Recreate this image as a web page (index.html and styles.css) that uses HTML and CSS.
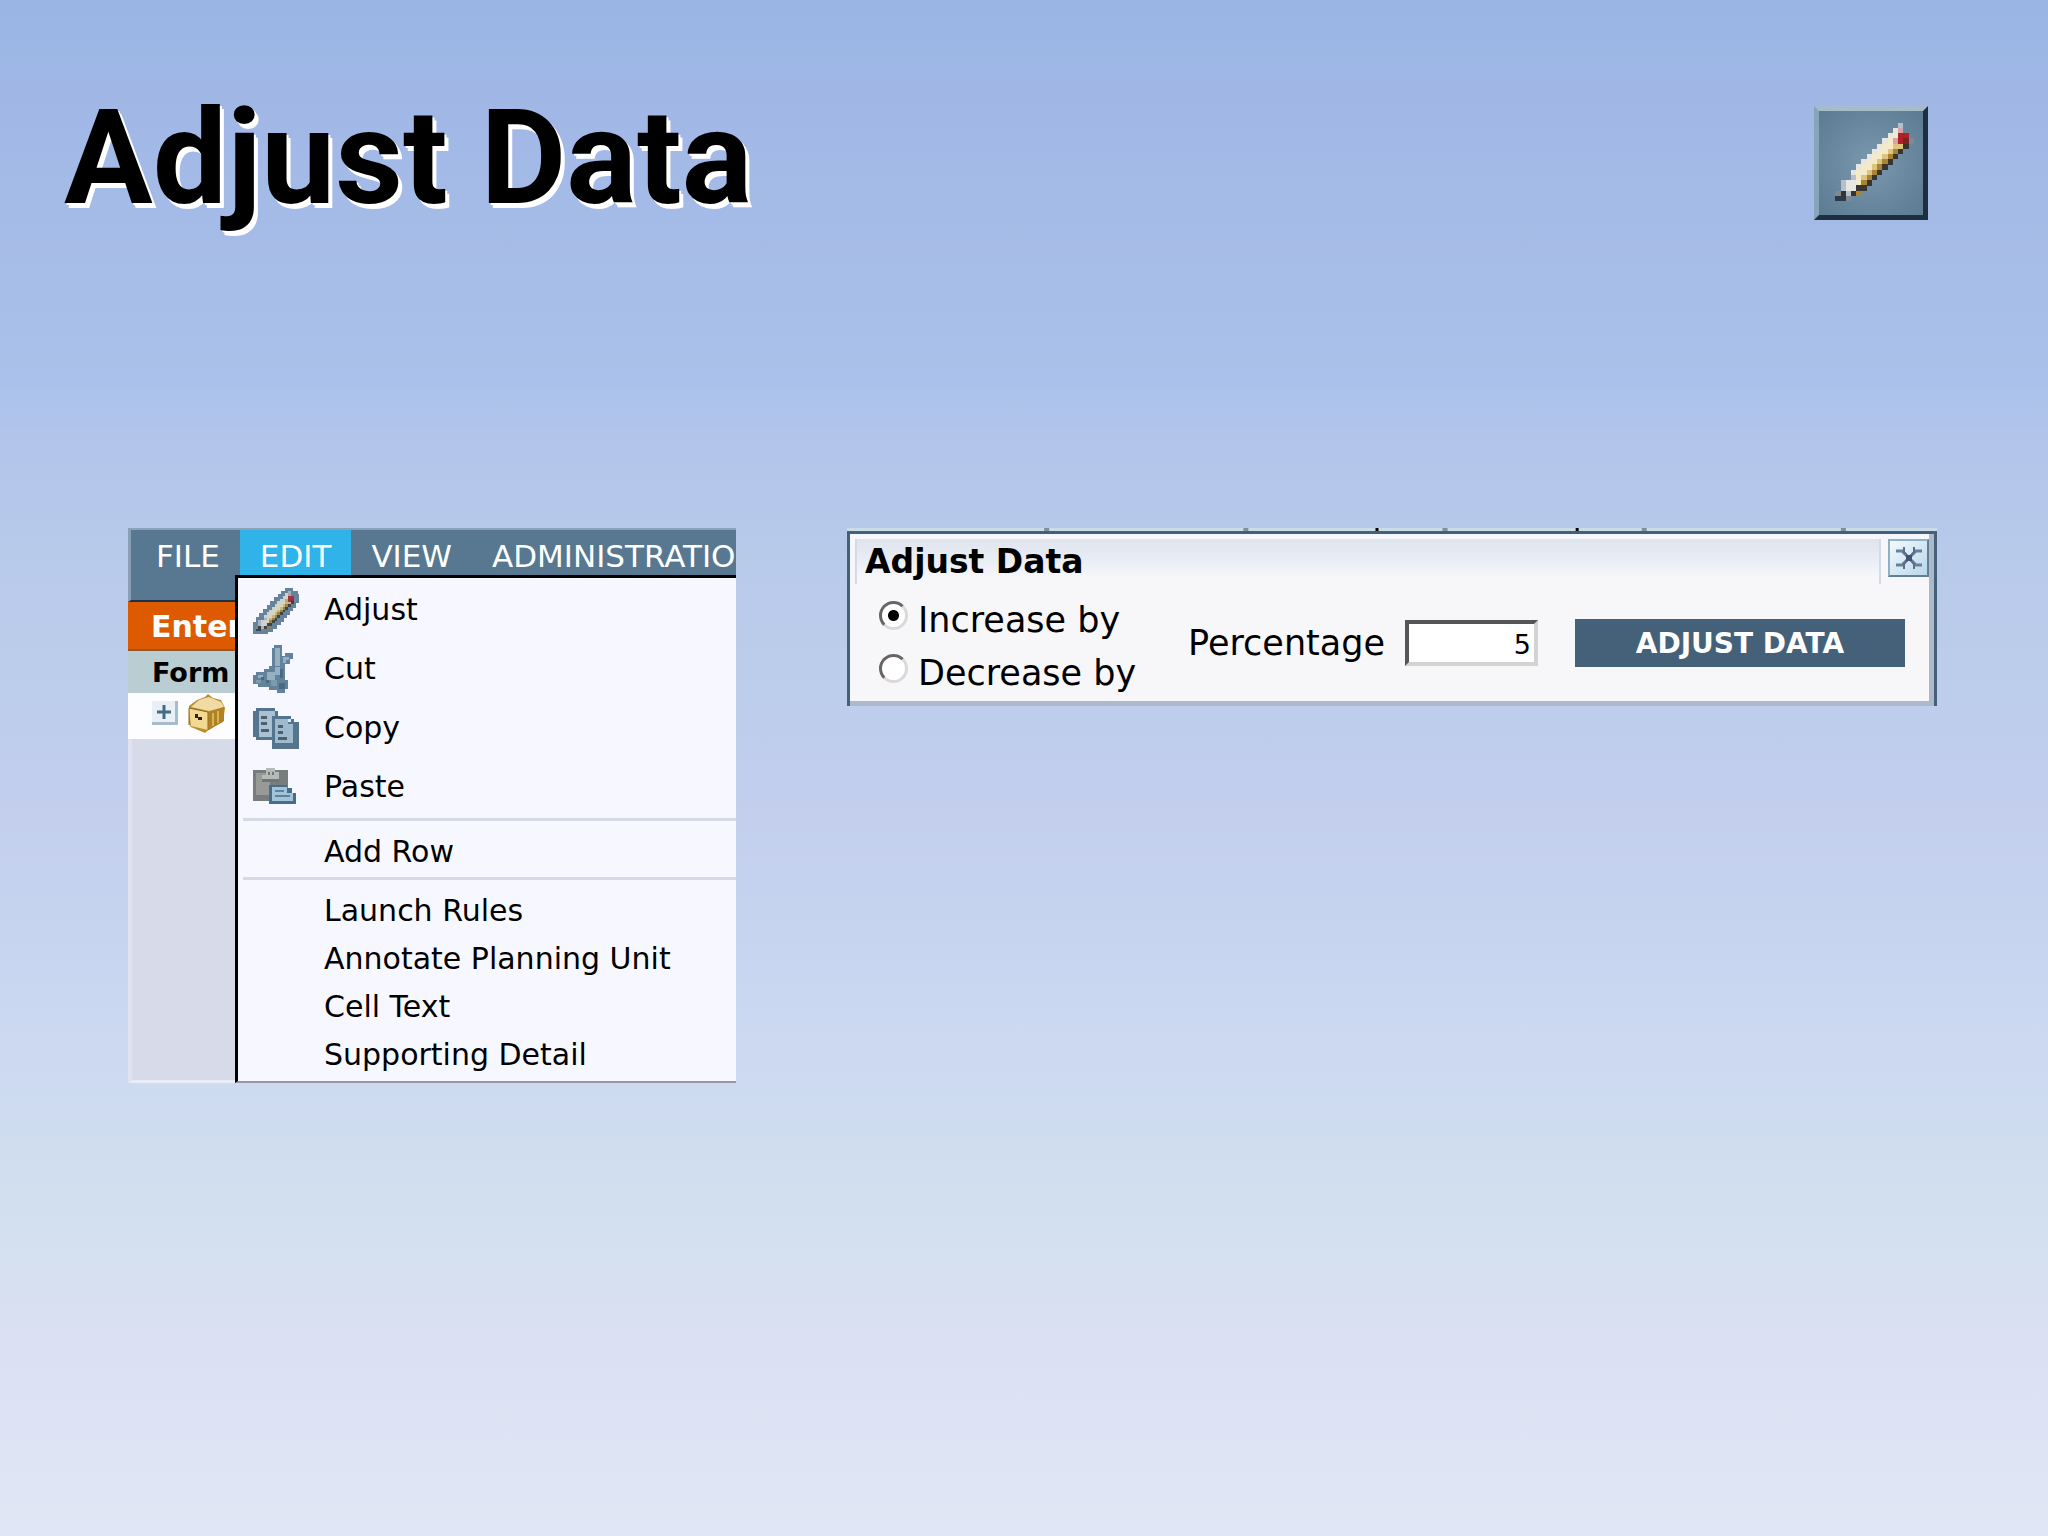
FILE: index.html
```html
<!DOCTYPE html>
<html lang="en">
<head>
<meta charset="utf-8">
<title>Adjust Data</title>
<link rel="stylesheet" href="styles.css">
</head>
<body>
<svg class="defs" width="0" height="0" aria-hidden="true">
  <symbol id="pencil" viewBox="8 5 17 17">
    <g fill="none" stroke-width="1.04" transform="translate(0 .5)">
      <path stroke="#b4c1ca" d="M21 6h1M10 17h1M10 18h1M12 16h1M11 19h1"/>
      <path stroke="#e6e6e2" d="M20 7h1M19 8h1M18 9h1M17 10h1M16 11h1M15 12h1M14 13h1M13 14h1M12 15h1M11 17h2M11 18h2"/>
      <path stroke="#f4e9c8" d="M20 8h1M19 9h1M18 10h2M17 11h2M16 12h2M15 13h2M14 14h2M13 15h2M13 16h1M13 17h1"/>
      <path stroke="#dcc47c" d="M20 10h2M19 11h1M18 12h1M17 13h1M16 14h1M15 15h1M14 16h1"/>
      <path stroke="#a98433" d="M20 11h1M19 12h1M18 13h1M17 14h1M16 15h1M15 16h1M14 17h1M13 19h1"/>
      <path stroke="#d3a5a8" d="M21 7h1M20 9h1"/>
      <path stroke="#b01f2a" d="M21 8h2M21 9h1"/>
      <path stroke="#7e2024" d="M22 9h1"/>
      <path stroke="#38342f" d="M22 10h1M21 11h1M20 12h1M19 13h1M18 14h1M17 15h1M16 16h1M15 17h1M13 18h2M12 19h1M10 19h1"/>
      <path stroke="#7f8893" d="M9 19h1M11 20h1M23 9h1"/>
      <path stroke="#2d3948" d="M9 20h2"/>
    </g>
  </symbol>
</svg>

<header class="header">
  <h1>Adjust Data</h1>
  <button class="tool" type="button" aria-label="Adjust">
    <svg viewBox="5.8 3.7 20.6 20.6" shape-rendering="crispEdges"><use href="#pencil" x="8" y="5" width="17.6" height="17.6"/></svg>
  </button>
</header>

<main class="content">
  <section class="app">
    <nav class="menubar">
      <button type="button">FILE</button>
      <button type="button" class="open">EDIT</button>
      <button type="button">VIEW</button>
      <button type="button">ADMINISTRATION</button>
    </nav>
    <div class="enter">Enter</div>
    <div class="form-head">Form</div>
    <div class="tree">
      <button type="button" class="expand" aria-label="Expand">
        <svg viewBox="0 0 14 14"><path d="M7 0v14M0 7h14" stroke="#456a86" stroke-width="3"/></svg>
      </button>
      <svg class="cube" viewBox="0 0 40 40">
        <path d="M2 12 10 6 18 3 21 0 26 4 34 6 38 14 36 28 24 34 18 39 4 33 2 30z" fill="#b98f2e"/>
        <path d="M4 13 12 6 22 3 34 8 37 13 22 17z" fill="#f1dba4"/>
        <path d="M2 14 21 18V36L4 32z" fill="#f2d890"/>
        <path d="M22 18 37 13V27L22 36z" fill="#b08223"/>
        <path d="M26 19v13M31 17v12" stroke="#d9b457" stroke-width="2"/>
        <path d="M2 14 21 18V36M2 14v17" fill="none" stroke="#8d6a1c" stroke-width="1"/>
        <path d="M8 20h3v3h4v3h-4v-2H8z" fill="#2d220c"/>
      </svg>
    </div>
    <div class="side"></div>

    <ul class="menu">
      <li><button type="button" class="item tall">
        <svg viewBox="0 0 46 48" shape-rendering="crispEdges">
          <path fill="#65839a" d="M32 2h8v3h5v3h1v9h-3v5h-3v3h-3v4h-3v3h-3v4h-3v3h-4v4h-4v3h-5v3H0V36h3v-5h3v-4h4v-4h4v-4h3v-4h4v-4h4V8h3V5h4z"/>
          <use href="#pencil" x="0" y="2" width="46" height="46" opacity=".8"/>
        </svg>Adjust</button></li>
      <li><button type="button" class="item tall">
        <svg viewBox="0 0 46 48" shape-rendering="crispEdges">
          <path fill="#63839b" d="M21 0h8v11h3V8h8v6h-3v5h-5v16h3v9h-3v4h-8v-3h-8v-3H5v-3H0V30h3v-3h8v-3h5v-3h3V3h2z"/>
          <path fill="#96b0c3" d="M22 3h5v18h-5zM30 12h6v3h-3v3h-3zM14 27h8v-5h5v8h-5v5h-8zM5 30h5v3H5z"/>
          <path fill="#4a6a83" d="M8 32h3v3H8zM13 35h3v3h-3zM26 38h6v6h-6zM27 24h3v9h-3z"/>
          <path fill="#7d9bb0" d="M18 35h6v6h-6zM3 35h5v3H3z"/>
        </svg>Cut</button></li>
      <li><button type="button" class="item tall">
        <svg viewBox="0 0 46 48" shape-rendering="crispEdges">
          <path fill="#55758e" d="M3 4h19v3h3v5h13v3h3v3h5v27H19v-9H3v-3H0V7h3z"/>
          <path fill="#a9c1d2" d="M6 7h16v5h-3v21H6z"/>
          <path fill="#9dbace" d="M22 15h13v5h5v19H22z"/>
          <path stroke="#4d5f6d" stroke-width="3" d="M8 13h6M8 19h6M8 26h8M25 22h5M25 28h5M25 34h9"/>
          <path fill="#dbe8f0" d="M35 15h3v3h-3z"/>
        </svg>Copy</button></li>
      <li><button type="button" class="item tall">
        <svg viewBox="0 0 46 48" shape-rendering="crispEdges">
          <path fill="#777c7c" d="M0 7h35v31H0z"/>
          <path fill="#979a97" d="M3 10h14v22H3z"/>
          <path fill="#b5bab8" d="M13 5h9v4h4v7H9v-4h4z"/>
          <path fill="#6f7675" d="M15 9h2v3h-2zM19 9h2v3h-2zM9 16h17v3H9z"/>
          <path fill="#466d89" d="M16 22h18v3h5v5h4v11H16z"/>
          <path fill="#a3c3d8" d="M19 24h15v6h6v8H19z"/>
          <path stroke="#5c84a0" stroke-width="2" d="M22 28h9M22 33h15"/>
        </svg>Paste</button></li>
      <li class="rule" role="separator"></li>
      <li><button type="button" class="item">Add Row</button></li>
      <li class="rule" role="separator"></li>
      <li><button type="button" class="item">Launch Rules</button></li>
      <li><button type="button" class="item">Annotate Planning Unit</button></li>
      <li><button type="button" class="item">Cell Text</button></li>
      <li><button type="button" class="item">Supporting Detail</button></li>
    </ul>
  </section>

  <section class="dialog">
    <svg class="ticks" viewBox="0 0 1089 3" preserveAspectRatio="none" aria-hidden="true">
      <path fill="#7f8f9f" d="M197 0h5v3h-5zM396 0h5v3h-5zM595 0h5v3h-5zM794 0h5v3h-5zM993 0h5v3h-5z"/>
      <path fill="#000" d="M528 0h3v3h-3zM728 0h3v3h-3z"/>
    </svg>
    <form class="frame">
      <div class="titlebar">
        <h2>Adjust Data</h2>
        <button type="button" class="close" aria-label="Close">
          <svg viewBox="0 0 26 22"><path d="M0 4h6l3 3 4 4-4 4-3 3H0M26 4h-6l-3 3-4 4 4 4 3 3h6" fill="none" stroke="#68809d" stroke-width="3"/><path d="M8 0v5l10 12v5M18 0v5L8 17v5" fill="none" stroke="#5d6d8a" stroke-width="2"/><path d="M10 8h6v6h-6z" fill="#46536f"/></svg>
        </button>
      </div>
      <div class="fields">
        <div class="choices">
          <label><input type="radio" name="direction" checked>Increase by</label>
          <label><input type="radio" name="direction">Decrease by</label>
        </div>
        <label class="percent">Percentage <input type="text" value="5"></label>
        <button type="button" class="apply">ADJUST DATA</button>
      </div>
    </form>
  </section>
</main>
</body>
</html>
```
FILE: styles.css
```css
* { box-sizing: border-box; }

body {
  margin: 0;
  min-height: 100vh;
  font-family: "DejaVu Sans", Verdana, sans-serif;
  color: #000;
  background: linear-gradient(#99b5e3 0%, #a1b7e6 7%, #a5bbe7 14%, #aac2ea 25%, #b3c5ea 29%, #b8caea 36%, #bccdec 43%, #c2ceec 52%, #c8d5f0 62%, #cddaf1 70%, #d1dfee 78%, #d6e0f1 83%, #dbe1f3 88%, #e1e6f5 100%);
}

button {
  margin: 0;
  padding: 0;
  border: 0;
  background: none;
  font: inherit;
  color: inherit;
}

svg { display: block; }
.defs { position: absolute; }

.header {
  display: flex;
  justify-content: space-between;
  align-items: flex-start;
  padding: 106px 120px 0 64px;
}

h1 {
  margin: 0;
  font: 700 132px/104px Roboto, sans-serif;
  text-shadow: 2px 2px #fff, 4px 5px #fff;
}

.tool {
  width: 114px;
  height: 114px;
  border: 5px solid;
  border-color: #a6bccb #1d2f3f #1d2f3f #86a5bb;
  background: radial-gradient(#7a98ae, #5b7b92);
}

.tool svg { width: 100%; }

.content {
  display: grid;
  grid-template-columns: minmax(0, 608fr) minmax(0, 1090fr);
  gap: 111px;
  align-items: start;
  padding: 308px 111px 64px 128px;
}

/* Application window with its open Edit menu */
.app {
  position: relative;
  display: flex;
  flex-direction: column;
  overflow: hidden;
}

.menubar {
  display: flex;
  align-items: flex-start;
  height: 74px;
  padding-left: 5px;
  border-top: 2px solid #8ba2bd;
  border-bottom: 2px solid #1c3046;
  border-left: 3px solid #8aa0b8;
  background: #577890;
  color: #fff;
  font-size: 31px;
}

.menubar button { height: 45px; padding: 0 20px; line-height: 52px; }
.menubar .open { background: #2fb3e8; }

.enter {
  height: 49px;
  padding-left: 23px;
  border-bottom: 2px solid #93582f;
  background: #dd5a00;
  color: #fff;
  font-weight: 700;
  font-size: 30px;
  line-height: 49px;
}

.form-head {
  height: 42px;
  padding-left: 24px;
  background: #bacdd3;
  font-weight: 700;
  font-size: 27px;
  line-height: 44px;
}

.tree {
  display: flex;
  align-items: flex-start;
  gap: 9px;
  height: 46px;
  padding: 1px 0 0 24px;
  background: #fdfdff;
}

.expand {
  display: grid;
  place-items: center;
  width: 26px;
  height: 24px;
  margin-top: 7px;
  border: 3px solid;
  border-width: 0 3px 3px 0;
  border-color: #a9bccb;
  background: #e9eff6;
}

.expand svg { width: 14px; }
.cube { width: 40px; }

.side {
  height: 344px;
  border-left: 4px solid #e0e2f1;
  border-bottom: 3px solid #e9edf8;
  background: #d7dae8;
}

.menu {
  position: absolute;
  top: 47px;
  right: 0;
  bottom: 0;
  left: 107px;
  margin: 0;
  padding: 2px 0 0;
  list-style: none;
  border: solid #000;
  border-width: 3px 0 2px 3px;
  border-bottom-color: #9a98a8;
  background: #f7f8ff;
  font-size: 30px;
}

.item {
  display: flex;
  align-items: center;
  gap: 25px;
  width: 100%;
  height: 48px;
  padding-left: 86px;
  white-space: nowrap;
}

.tall { height: 59px; padding-left: 15px; }
.item svg { flex: none; width: 46px; height: 48px; }

.rule {
  height: 3px;
  margin: 2px 0 6px 5px;
  background: #d6dae6;
}

/* Adjust Data dialog */
.ticks {
  width: 100%;
  height: 3px;
  background: #c8dde8;
}

.frame {
  border: 3px solid #446179;
  border-bottom: 0;
  background: #f7f7fa;
  box-shadow: inset -5px -5px #adb8ca, inset 4px 5px #f4f7fe;
}

.titlebar {
  display: flex;
  align-items: flex-start;
  gap: 7px;
  padding: 5px 5px 0;
}

h2 {
  flex: 1;
  height: 45px;
  margin: 0;
  padding-left: 8px;
  border: solid #d3dbe9;
  border-width: 0 2px;
  background: linear-gradient(#e0e4ec, #e9edf6 22px, #f7f7fa 38px);
  font-size: 33px;
  line-height: 45px;
}

.close {
  display: grid;
  place-items: center;
  width: 41px;
  height: 38px;
  border: 2px solid;
  border-color: #8fb0c6 #5f8099 #5f8099 #8fb0c6;
  background: linear-gradient(135deg, #f2faff, #b9d7ea);
}

.close svg { width: 26px; }

.fields {
  display: flex;
  align-items: center;
  padding: 6px 29px 10px;
  font-size: 35px;
}

.choices { margin-right: auto; }

.choices label {
  display: flex;
  align-items: flex-start;
  gap: 10px;
  height: 53px;
  line-height: 60px;
}

input[type="radio"] {
  appearance: none;
  width: 29px;
  height: 29px;
  margin: 11px 0 0;
  border: 3px solid;
  border-color: #686468 #dcd8d8 #dcd8d8 #686468;
  border-radius: 50%;
  background: #fff;
}

input[type="radio"]:checked { background: radial-gradient(circle, #000 5px, #fff 6px); }

.percent {
  display: flex;
  align-items: center;
  gap: 20px;
}

.percent input {
  width: 133px;
  height: 46px;
  padding: 2px 3px 0;
  border: 4px solid;
  border-color: #555 #d5d3d2 #d5d3d2 #555;
  border-radius: 0;
  background: #fff;
  font: 27px "DejaVu Sans", Verdana, sans-serif;
  text-align: right;
}

.apply {
  width: 330px;
  height: 48px;
  margin-left: 37px;
  background: #446179;
  color: #fff;
  font-weight: 700;
  font-size: 28px;
}
```
